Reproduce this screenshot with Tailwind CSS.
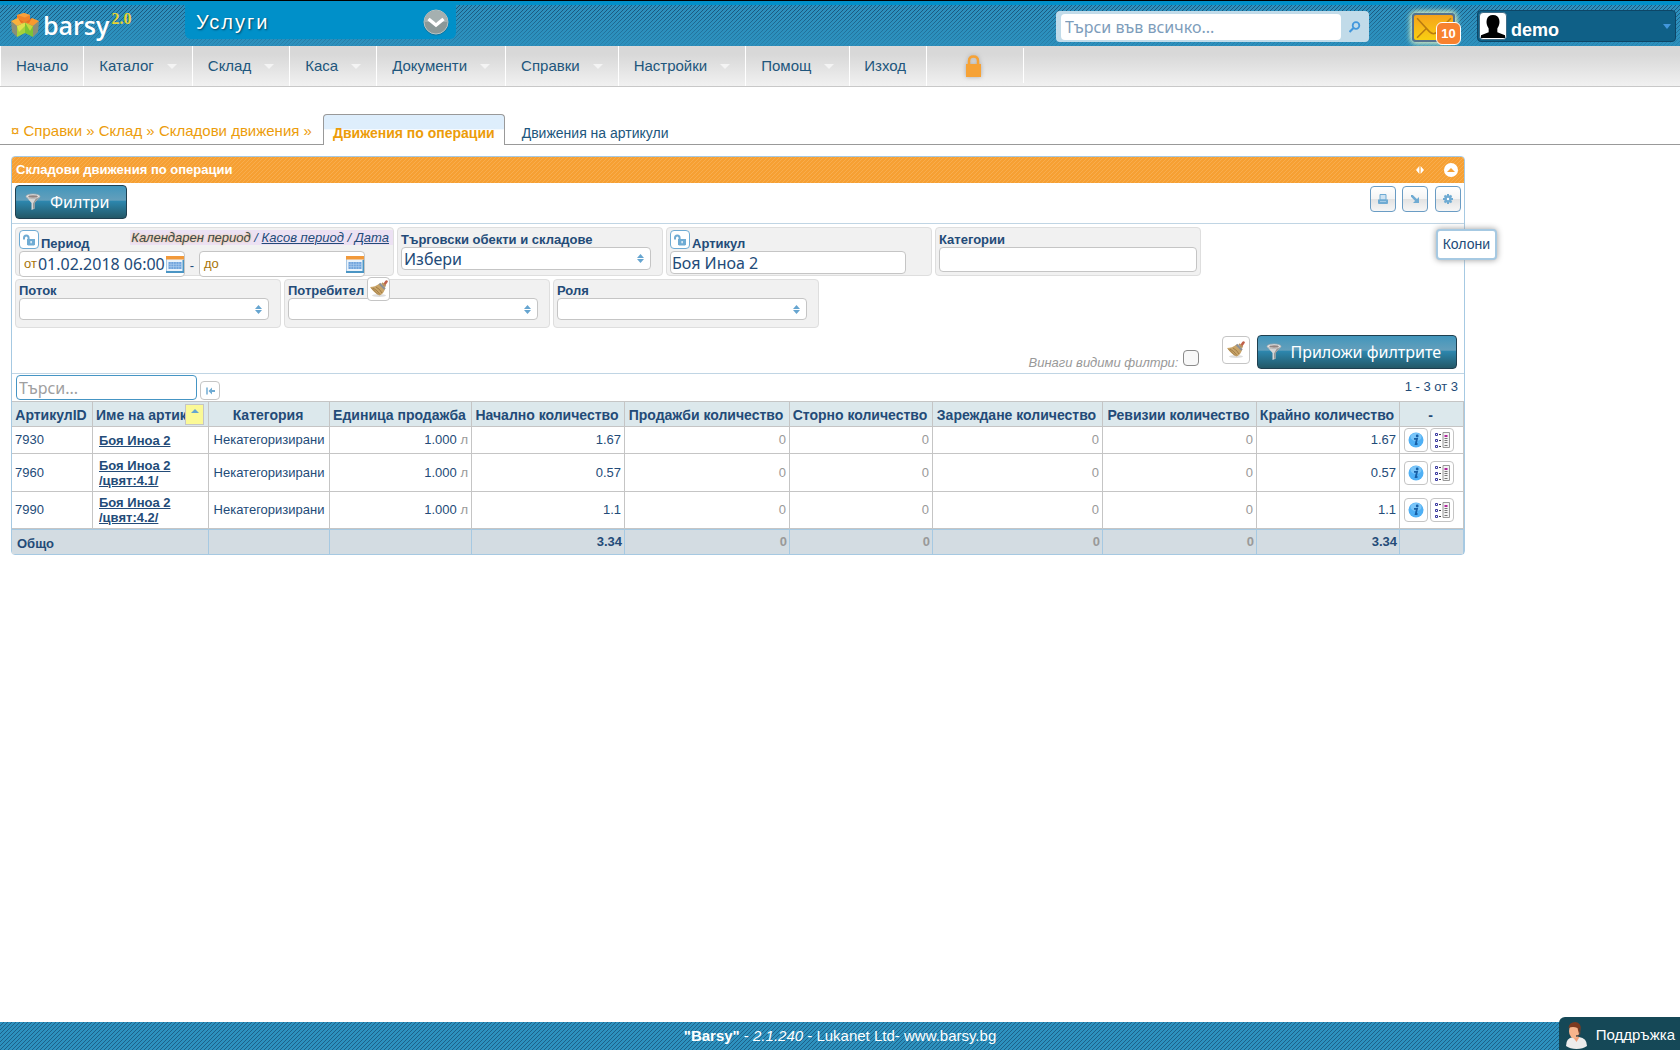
<!DOCTYPE html>
<html lang="bg">
<head>
    <meta charset="UTF-8">
    <meta name="viewport" content="width=device-width, initial-scale=1.0">
    <title>Barsy - Складови движения по операции</title>
    <script src="https://cdn.jsdelivr.net/npm/@tailwindcss/browser@4"></script>
    <style>
        .hatch, .hatch-fade, .hatch-orange {
            background-color: #2d91be;
            background-image: linear-gradient(135deg, transparent 42%, #1d6189 44% 56%, transparent 58%);
            background-size: 4px 4px;
        }
        .hatch-fade {
            background-image: linear-gradient(rgba(43, 143, 188, 0) 20%, rgba(43, 143, 188, .8)), linear-gradient(135deg, transparent 42%, #1b587e 44% 56%, transparent 58%);
            background-size: 100% 100%, 4px 4px;
        }
        .hatch-orange {
            background-color: #f6a033;
            background-image: linear-gradient(135deg, transparent 42%, #f8ad4e 44% 56%, transparent 58%);
        }
    </style>
</head>
<body class="flex min-h-screen flex-col bg-white font-['Liberation_Sans',Arial,sans-serif] text-[13px] text-[#234b78]">
    <!-- icons -->
    <svg class="hidden">
        <symbol id="unlock" viewBox="0 0 12 12">
            <path d="M1 5.500V4q0-2.500 2.300-2.500T5.600 4v2" fill="none" stroke="#6fabd3" stroke-width="2" />
            <path d="M4 5h8v5.500l-1 1H5l-1-1z" fill="#6fabd3" />
            <path d="M7.500 7h1.200v2.200H7.500z" fill="#fff" />
        </symbol>
        <symbol id="updown" viewBox="0 0 7 9">
            <path d="M3.500 0 7 4H0zM3.500 9 0 5h7z" fill="#66a5d0" />
        </symbol>
        <symbol id="broom" viewBox="0 0 18 18">
            <ellipse cx="9" cy="15.500" rx="7" ry="1.500" fill="#ddd" />
            <path d="m14 5 2.500-3.500" stroke="#c0604a" stroke-width="2.600" stroke-linecap="round" />
            <path d="M9.500 3.500 15 9q-1.500 5-5.500 6.500Q4.500 13.500 0 7q5 0 9.500-3.500z" fill="#c9a468" />
            <path d="M3 8q4 2 7 6.500M6 7q4 2 6 6M1.500 8 8 14.500" fill="none" stroke="#8f6c38" stroke-width=".7" />
            <path d="m9.500 3.500 5.500 5.500" stroke="#8b8f96" stroke-width="2.200" />
            <path d="m12 3 3.500 3.500" stroke="#b89560" stroke-width="2" />
        </symbol>
        <symbol id="funnel" viewBox="0 0 16 18">
            <path d="M1 3.500 6.500 10v7l3-1.200V10L15 3.500z" fill="#d6d6d6" />
            <path d="M8 10.500V16l1.500-.7V10L15 3.500h-3z" fill="#969696" />
            <ellipse cx="8" cy="3.300" rx="7" ry="2.300" fill="#e5e5e5" stroke="#aaa" stroke-width=".7" />
            <ellipse cx="8" cy="3.500" rx="4.800" ry="1.200" fill="#918481" />
        </symbol>
        <symbol id="calendar" viewBox="0 0 18 17">
            <path d="M.5.5h17v16H.5z" fill="#eaf3fb" stroke="#a9c8e4" />
            <path d="M0 0h18v3.500H0z" fill="#f1993a" />
            <path d="M2.500 6h13v7h-13z" fill="#6fa3dc" />
            <path d="M2.500 8.300h13M2.500 10.600h13M5 6v7M7.600 6v7M10.200 6v7M12.800 6v7" stroke="#b5d2f0" stroke-width=".6" />
            <path d="M0 15h16.500V4H18v13H0z" fill="#4a95c4" />
        </symbol>
        <symbol id="info" viewBox="0 0 16 16">
            <circle cx="8" cy="8" r="7.500" fill="#4fb0f5" />
            <ellipse cx="8" cy="5" rx="5.500" ry="4" fill="#8fd0fb" opacity=".7" />
            <circle cx="9.200" cy="4" r="1.400" fill="#175fa6" />
            <path d="M6 6.800h3L7.700 12H9.500" fill="none" stroke="#175fa6" stroke-width="1.800" />
        </symbol>
        <symbol id="details" viewBox="0 0 16 16">
            <path d="M1.500 1.500h2v2h-2zM1.500 7.500h2v2h-2zM1.500 13.500h2v2h-2z" fill="#fff" stroke="#3a3aa0" />
            <path d="M5 2.500h2M5 8.500h2M5 14.500h2" stroke="#444" />
            <path d="M9 .5h6.500v15H9z" fill="#f4f4f4" stroke="#999" />
            <path d="M10.500 4h3" stroke="#b0269c" stroke-width="2" />
            <path d="M10.500 6.500h3M10.500 8.500h3M10.500 10.500h3M10.500 13.500h3" stroke="#777" />
        </symbol>
    </svg>

    <header class="hatch-fade flex h-[46px] justify-between border-t border-black shadow-[inset_0_4px_0_#0090c9]">
        <div class="flex">
            <a href="#" class="flex w-[185px] items-start pt-3 pl-[11px]" aria-label="barsy 2.0">
                <svg class="h-[25px] w-7" viewBox="0 0 28 25">
                    <path d="M0 8l6 5v11l-5-5zM28 8l-6 5v11l5-5z" fill="#8a8f78" />
                    <path d="M6 13l8-3.500V20l-8 4z" fill="#a5d23c" />
                    <path d="M22 13l-8-3.500V20l8 4z" fill="#7cc435" />
                    <path d="M6 13l8-3.500V13l-6 6z" fill="#dfe04a" />
                    <path d="M14 9.500l8 3.500-3 5z" fill="#c4d83c" />
                    <path d="M6 2l7-2 6 2v4.500L14 9.500 6 6.500z" fill="#f08428" />
                    <path d="M6 2l7-2 6 2-5 2.500z" fill="#f9a03a" />
                    <path d="M0 8l7-3 7 4.500L6 13z" fill="#fbb13c" />
                    <path d="M28 8l-7-3-7 4.500 8 3.500z" fill="#f89a2e" />
                    <path d="M7 5l7 4.500L10 10zM21 5l-7 4.500 4 .5z" fill="#e96f20" />
                </svg>
                <span class="ml-1 font-['Open_Sans',sans-serif] text-[25px] leading-6 font-semibold text-white">barsy</span>
                <span class="ml-[2px] font-['Liberation_Serif',serif] text-base leading-3 font-bold text-[#e8d330]">2.0</span>
            </a>
            <button class="flex h-[38px] w-[271px] items-center justify-between rounded-b-md bg-[#0090c9] pt-[3px] pr-[6px] pl-[11px] text-xl tracking-widest text-white text-shadow-[1px_1px_2px_#00405a]">
                Услуги
                <svg class="h-7 w-7" viewBox="0 0 28 28">
                    <circle cx="14" cy="15" r="12.500" fill="#1b6a8c" opacity=".6" />
                    <circle cx="14" cy="14" r="12" fill="#8b9898" stroke="#b8c4c4" />
                    <path d="M2.500 14a11.500 11.500 0 0 1 23 0z" fill="#a5b0b0" />
                    <path d="m6.500 11 7.500 6 7.500-6" fill="none" stroke="#fff" stroke-width="3.500" />
                </svg>
            </button>
        </div>
        <div class="flex pr-1">
            <form class="mt-[10px] flex h-[31px] w-[313px] items-center rounded bg-[#c1dbe9] pl-[5px]">
                <input type="text" aria-label="Търси във всичко" placeholder="Търси във всичко..." class="h-[26px] w-[280px] rounded bg-white px-1 font-['Noto_Sans',sans-serif] text-base placeholder:text-[#7d9dbb]">
                <button type="button" aria-label="Търси" class="flex flex-1 justify-center">
                    <svg class="h-3 w-3" viewBox="0 0 12 12"><circle cx="7" cy="4.500" r="3.300" fill="none" stroke="#4297dc" stroke-width="1.800" /><path d="m4.500 7-4 4" stroke="#4297dc" stroke-width="2.200" /></svg>
                </button>
            </form>
            <button aria-label="Съобщения" class="relative mt-3 ml-[43px] h-[29px] w-[43px] rounded border-2 border-[#56728f] bg-gradient-to-b from-[#f5a21b] to-[#f8cf10] shadow-[0_0_5px_2px_#d8ecc0]">
                <svg class="h-full w-full" viewBox="0 0 38 24"><path d="M3 3l12 13q4 4 8 0L36 3M3 22 12 13M36 22 27 13" fill="none" stroke="#b97c10" stroke-width="1.500" /></svg>
                <span class="absolute top-[7px] left-[22px] flex h-[23px] w-[25px] items-center justify-center rounded-md border border-white bg-[#f8822f] text-[13px] font-bold text-white">10</span>
            </button>
            <button class="mt-[9px] ml-[22px] flex h-8 w-[199px] items-center rounded border border-[#0d4667] bg-[#0f6087] pr-1 pl-px text-lg font-bold text-white">
                <svg class="h-7 w-7 rounded-sm border border-[#3f6c87] bg-white" viewBox="0 0 27 27"><path d="M1 26v-3l8-3v-4Q6 12 7 7q1-5 6.500-5T20 7q1 5-2 9v4l8 3v3z" fill="#000" /></svg>
                <span class="mt-[8px] ml-1">demo</span>
                <svg class="ml-auto h-[5px] w-2" viewBox="0 0 8 5"><path d="M0 0h8L4 5z" fill="#4297dc" /></svg>
            </button>
        </div>
    </header>

    <nav id="mainMenu" class="flex h-[41px] border-b border-[#c8c8c8] bg-gradient-to-b from-[#d8d8d8] from-20% to-[#f1f1f1] text-[15px] text-[#21567c]">
        <div class="border-l border-white"></div>
    </nav>

    <div class="mt-[27px] flex h-[31px] border-b border-[#999]">
        <div class="mt-2 ml-[11px] w-[312px] text-[15px] leading-[18px] text-[#ec9c0a]">
            ¤ <a href="#">Справки</a> » <a href="#">Склад</a> » <a href="#">Складови движения</a> »
        </div>
        <a href="#" class="flex h-[31px] items-center rounded-t border border-b-0 border-[#999] bg-gradient-to-b from-[#deeefc] from-45% to-white to-50% px-[9px] pt-[6px] text-sm font-bold text-[#ec9c0a]">Движения по операции</a>
        <a href="#" class="ml-[17px] flex items-center pt-[7px] text-sm text-[#21567c]">Движения на артикули</a>
    </div>

    <main class="relative mt-[11px] mr-[215px] ml-[11px] rounded border border-[#a6c9e2]">
        <div class="hatch-orange flex h-[26px] items-center rounded-t-[3px] pr-[6px] pl-1 font-bold text-white">
            <h1>Складови движения по операции</h1>
            <svg class="ml-auto h-2 w-2" viewBox="0 0 8 8"><path d="M3.400 0v8L0 4zM4.600 0v8L8 4z" fill="#fff" /></svg>
            <button aria-label="Свий" class="ml-5 flex h-[14px] w-[14px] items-center justify-center rounded-full bg-white">
                <svg class="h-1 w-2" viewBox="0 0 8 4"><path d="M0 4h8L4 0z" fill="#f6a236" /></svg>
            </button>
        </div>

        <div class="flex h-[41px] items-start border-b border-[#c0d5e4] pt-[2px] pr-[3px] pl-[3px]">
            <button class="flex h-[34px] items-center rounded border border-[#1f3f4f] bg-[linear-gradient(#4296bc,#649fbb_45%,#2d88b0_46%,#235867)] pr-[16px] pl-[9px] font-['Noto_Sans',sans-serif] text-base text-white">
                <svg class="mr-[9px] h-[18px] w-4"><use href="#funnel" /></svg>Филтри
            </button>
            <div class="mt-px ml-auto flex gap-[6px]">
                <button aria-label="Печат" class="flex h-[26px] w-[26px] items-center justify-center rounded border border-[#6a9cc4] bg-[linear-gradient(#fff,#f4f4f4_49%,#e2e2e2_50%,#f6f6f6)]">
                    <svg class="h-[10px] w-[10px]" viewBox="0 0 10 10"><path d="M2 .5h6V6H2z" fill="#cfe3f2" stroke="#6fabd3" /><path d="M0 5.500h10V9q0 1-1 1H1Q0 10 0 9z" fill="#6fabd3" /><path d="M2 7.500h6" stroke="#a4cbe6" /></svg>
                </button>
                <button aria-label="Експорт" class="flex h-[26px] w-[26px] items-center justify-center rounded border border-[#6a9cc4] bg-[linear-gradient(#fff,#f4f4f4_49%,#e2e2e2_50%,#f6f6f6)]">
                    <svg class="h-2 w-2" viewBox="0 0 8 8"><path d="m0 0 6 6" stroke="#6fabd3" stroke-width="2.500" /><path d="M8 2v6H2z" fill="#6fabd3" /></svg>
                </button>
                <button aria-label="Колони" class="ml-px flex h-[26px] w-[26px] items-center justify-center rounded border border-[#6a9cc4] bg-[linear-gradient(#fff,#f4f4f4_49%,#e2e2e2_50%,#f6f6f6)]">
                    <svg class="h-[10px] w-[10px]" viewBox="0 0 10 10"><path d="M5 0v10M0 5h10M1.500 1.500l7 7M8.500 1.500l-7 7" stroke="#6fabd3" stroke-width="2" /><circle cx="5" cy="5" r="3.700" fill="#6fabd3" /><circle cx="5" cy="5" r="1.200" fill="#fff" /></svg>
                </button>
            </div>
        </div>

        <!-- filters -->
        <div class="flex flex-wrap gap-[3px] pt-[3px] pl-[3px]">
            <div class="h-[49px] w-[379px] rounded border border-[#dedede] bg-[#f1f1f1] pl-[3px]">
                <div class="flex h-[23px] items-start pt-[2px]">
                    <button aria-label="Отключи" class="flex h-[19px] w-5 items-center justify-center rounded-sm border border-[#6fabd3] bg-white"><svg class="h-3 w-3"><use href="#unlock" /></svg></button>
                    <label for="dateFrom" class="ml-[2px] pt-[5px] leading-[18px] font-bold">Период</label>
                    <div class="ml-auto bg-[#ece1f3] pr-1 pl-px leading-[15px] italic">
                        <span class="text-[#3c4a50] text-shadow-[0_0_2px_#f3b64c]">Календарен период</span> / <a href="#" class="underline">Касов период</a> / <a href="#" class="underline">Дата</a>
                    </div>
                </div>
                <div class="flex items-center">
                    <div class="flex h-[26px] w-[166px] items-center rounded border border-[#c5c5c5] bg-white pl-1">
                        <span class="text-[#a87408]">от</span>
                        <input id="dateFrom" type="text" value="01.02.2018 06:00" class="w-0 flex-1 pl-px font-['Noto_Sans',sans-serif] text-base">
                        <svg class="h-[17px] w-[18px]"><use href="#calendar" /></svg>
                    </div>
                    <span class="w-[14px] pt-1 text-center">-</span>
                    <div class="flex h-[26px] w-[166px] items-center rounded border border-[#c5c5c5] bg-white pl-1">
                        <label for="dateTo" class="text-[#a87408]">до</label>
                        <input id="dateTo" type="text" class="w-0 flex-1 pl-px font-['Noto_Sans',sans-serif] text-base">
                        <svg class="h-[17px] w-[18px]"><use href="#calendar" /></svg>
                    </div>
                </div>
            </div>
            <div class="h-[49px] w-[266px] rounded border border-[#dedede] bg-[#f1f1f1] pl-[3px]">
                <label for="objects" class="block h-[19px] pt-1 leading-4 font-bold">Търговски обекти и складове</label>
                <div class="relative w-[250px]">
                    <select id="objects" class="block h-[23px] w-full appearance-none rounded border border-[#c5c5c5] bg-white pl-[2px] font-['Noto_Sans',sans-serif] text-base leading-5"><option>Избери</option></select>
                    <svg class="pointer-events-none absolute top-[7px] right-[7px] h-[9px] w-[7px]"><use href="#updown" /></svg>
                </div>
            </div>
            <div class="h-[49px] w-[266px] rounded border border-[#dedede] bg-[#f1f1f1] pl-[3px]">
                <div class="flex h-[23px] items-start pt-[2px]">
                    <button aria-label="Отключи" class="flex h-[19px] w-5 items-center justify-center rounded-sm border border-[#6fabd3] bg-white"><svg class="h-3 w-3"><use href="#unlock" /></svg></button>
                    <label for="article" class="ml-[2px] pt-[5px] leading-[18px] font-bold">Артикул</label>
                </div>
                <input id="article" type="text" value="Боя Иноа 2" class="block h-[23px] w-[236px] rounded border border-[#c5c5c5] bg-white pl-px font-['Noto_Sans',sans-serif] text-base">
            </div>
            <div class="h-[49px] w-[266px] rounded border border-[#dedede] bg-[#f1f1f1] pl-[3px]">
                <label for="categories" class="block h-[19px] pt-1 leading-4 font-bold">Категории</label>
                <input id="categories" type="text" class="block h-[25px] w-[258px] rounded border border-[#c5c5c5] bg-white px-[2px]">
            </div>
        </div>
        <div class="flex gap-[3px] pt-[3px] pl-[3px]">
            <div class="h-[49px] w-[266px] rounded border border-[#dedede] bg-[#f1f1f1] pl-[3px]">
                <label for="flow" class="block h-[18px] pt-[3px] leading-4 font-bold">Поток</label>
                <div class="relative w-[250px]">
                    <select id="flow" class="block h-[22px] w-full appearance-none rounded border border-[#c5c5c5] bg-white"><option></option></select>
                    <svg class="pointer-events-none absolute top-[7px] right-[7px] h-[9px] w-[7px]"><use href="#updown" /></svg>
                </div>
            </div>
            <div class="relative h-[49px] w-[266px] rounded border border-[#dedede] bg-[#f1f1f1] pl-[3px]">
                <label for="user" class="block h-[18px] pt-[3px] leading-4 font-bold">Потребител</label>
                <div class="relative w-[250px]">
                    <select id="user" class="block h-[22px] w-full appearance-none rounded border border-[#c5c5c5] bg-white"><option></option></select>
                    <svg class="pointer-events-none absolute top-[7px] right-[7px] h-[9px] w-[7px]"><use href="#updown" /></svg>
                </div>
                <button aria-label="Изчисти" class="absolute -top-[3px] left-[82px] flex h-6 w-[23px] items-center justify-center rounded border border-[#c5c5c5] bg-white"><svg class="h-[18px] w-[18px]"><use href="#broom" /></svg></button>
            </div>
            <div class="h-[49px] w-[266px] rounded border border-[#dedede] bg-[#f1f1f1] pl-[3px]">
                <label for="role" class="block h-[18px] pt-[3px] leading-4 font-bold">Роля</label>
                <div class="relative w-[250px]">
                    <select id="role" class="block h-[22px] w-full appearance-none rounded border border-[#c5c5c5] bg-white"><option></option></select>
                    <svg class="pointer-events-none absolute top-[7px] right-[7px] h-[9px] w-[7px]"><use href="#updown" /></svg>
                </div>
            </div>
        </div>
        <div class="flex h-[46px] items-start justify-end border-b border-[#c0d5e4] pt-[7px] pr-[7px]">
            <label for="always" class="mt-5 text-[13px] leading-4 text-[#999] italic">Винаги видими филтри:</label>
            <input id="always" type="checkbox" class="mt-[15px] ml-[5px] h-4 w-4 appearance-none rounded border border-[#8a8a8a] bg-[#f8f8f8]">
            <button aria-label="Изчисти филтрите" class="mt-px ml-[23px] flex h-7 w-7 items-center justify-center rounded border border-[#c5c5c5] bg-white"><svg class="h-[18px] w-[18px]"><use href="#broom" /></svg></button>
            <button class="ml-[7px] flex h-[34px] items-center rounded border border-[#1f3f4f] bg-[linear-gradient(#4296bc,#649fbb_45%,#2d88b0_46%,#235867)] pr-[15px] pl-[8px] font-['Noto_Sans',sans-serif] text-base text-white">
                <svg class="mr-[8px] h-[18px] w-4"><use href="#funnel" /></svg>Приложи филтрите
            </button>
        </div>

        <div class="flex h-[27px] items-start pt-px pr-[6px] pl-1">
            <input type="text" aria-label="Търси в таблицата" placeholder="Търси..." class="h-[25px] w-[181px] rounded border border-[#4595c4] px-[2px] font-['Noto_Sans',sans-serif] text-base placeholder:text-[#a0a0a0]">
            <button aria-label="Първа страница" class="mt-[6px] ml-[3px] flex h-[19px] w-5 items-center justify-center rounded border border-[#c5c5c5]">
                <svg class="h-2 w-[9px]" viewBox="0 0 9 8"><path d="M1 .5v7" stroke="#6fabd3" stroke-width="1.500" /><path d="M6 .5v7L2.500 4zM5 3h4v2H5z" fill="#6fabd3" /></svg>
            </button>
            <span class="ml-auto pt-1 leading-4">1 - 3 от 3</span>
        </div>

        <table class="w-full table-fixed border-separate border-spacing-0 leading-4">
            <colgroup>
                <col class="w-[81px]"><col class="w-[116px]"><col class="w-[121px]"><col class="w-[142px]"><col class="w-[153px]"><col class="w-[165px]"><col class="w-[143px]"><col class="w-[170px]"><col class="w-[154px]"><col class="w-[143px]"><col>
            </colgroup>
            <thead><tr id="gridHead"></tr></thead>
            <tbody id="gridBody"></tbody>
            <tfoot><tr id="gridFoot"></tr></tfoot>
        </table>

        <div role="tooltip" class="absolute top-[72px] -right-[33px] flex h-[31px] items-center rounded-sm border-2 border-[#a6c9e2] bg-white px-[5px] pb-px text-sm shadow-[0_0_6px_#999]">Колони</div>
    </main>

    <footer class="hatch relative mt-auto flex h-7 items-center justify-center text-[15px] text-white">
        <p><b>"Barsy"</b> - <i>2.1.240</i> - Lukanet Ltd- www.barsy.bg</p>
        <button class="absolute right-0 bottom-0 flex h-[33px] items-center rounded-tl-md bg-[#154857] pt-1 pr-[5px] pl-[7px]">
            <svg class="mr-[9px] h-[27px] w-[21px]" viewBox="0 0 21 27">
                <path d="M0 24q0-8 7-9h6q8 1 8 9-4 3-10.500 3T0 24z" fill="#ececec" />
                <path d="m7 15 3.500 5 3-5z" fill="#f0a078" />
                <ellipse cx="8.500" cy="9" rx="5.500" ry="7.500" fill="#f7b48c" />
                <path d="M2.500 6Q3 0 9.500 0q5.500 1 5.500 7l-2 5-1.500-6Q7 4 2.500 6z" fill="#7c3a20" />
                <path d="M14 6v5q0 3-4 3" fill="none" stroke="#444" stroke-width="1.300" />
            </svg>Поддръжка
        </button>
    </footer>

    <script>
        const menu = [
            ['Начало', false], ['Каталог', true], ['Склад', true], ['Каса', true], ['Документи', true],
            ['Справки', true], ['Настройки', true], ['Помощ', true], ['Изход', false],
        ];
        const mainMenu = document.getElementById('mainMenu');
        menu.forEach(([title, sub], i) => {
            const arrow = sub ? '<svg class="ml-[13px] h-[5px] w-[10px]" viewBox="0 0 10 5"><path d="M0 0h10L5 5z" fill="#f4f4f4"/></svg>' : '';
            const padding = i === menu.length - 1 ? 'pl-[14px] pr-5' : 'px-[15px]';
            mainMenu.innerHTML += `<a href="#" class="flex items-center border-r border-white ${padding}">${title}${arrow}</a>`;
        });
        mainMenu.innerHTML += `
            <a href="#" aria-label="Заключи" class="mt-[2px] flex h-[35px] w-[97px] items-center justify-center border-r border-white pr-1">
                <svg class="h-[22px] w-[15px] drop-shadow-[0_0_2px_#aaa]" viewBox="0 0 15 22"><path d="M3 11V6q0-4.500 4.500-4.500T12 6v5" fill="none" stroke="#f6a236" stroke-width="2.500"/><path d="M0 9h15v13H0z" fill="#f6a236"/></svg>
            </a>`;

        const columns = ['АртикулID', 'Име на артикул', 'Категория', 'Единица продажба', 'Начално количество', 'Продажби количество', 'Сторно количество', 'Зареждане количество', 'Ревизии количество', 'Крайно количество', '-'];
        document.getElementById('gridHead').innerHTML = columns.map((title, i) => {
            const sort = i === 1 ? '<span class="absolute top-[2px] right-1 flex h-[21px] w-[19px] justify-center border border-[#c5c5c5] bg-[#fbf996] pt-1"><svg class="h-1 w-2" viewBox="0 0 8 4"><path d="M0 4h8L4 0z" fill="#66a5d0"/></svg></span>' : '';
            const align = i === 1 ? 'pl-[3px] text-left' : 'pr-[3px] pl-px text-center';
            return `<th class="relative h-[26px] overflow-hidden border-y border-r border-[#c5c5c5] bg-[#dce8ec] pt-[2px] text-sm leading-5 whitespace-nowrap ${align}">${title}${sort}</th>`;
        }).join('');

        const rows = [
            { id: 7930, name: 'Боя Иноа 2', start: '1.67', end: '1.67', height: 'h-[27px]' },
            { id: 7960, name: 'Боя Иноа 2<br>/цвят:4.1/', start: '0.57', end: '0.57', height: 'h-[38px]' },
            { id: 7990, name: 'Боя Иноа 2<br>/цвят:4.2/', start: '1.1', end: '1.1', height: 'h-[37px]' },
        ];
        const td = 'border-r border-b border-[#c5c5c5] px-[3px]';
        const zero = `<td class="${td} text-right text-[#999]">0</td>`;
        const iconButton = (icon, label) => `<button aria-label="${label}" class="flex h-6 w-6 items-center justify-center rounded border border-[#c5c5c5] bg-white"><svg class="h-4 w-4"><use href="#${icon}"/></svg></button>`;
        document.getElementById('gridBody').innerHTML = rows.map((r) => `
            <tr class="${r.height}">
                <td class="${td}">${r.id}</td>
                <td class="${td}"><a href="#" class="block pl-[3px] leading-[15px] font-bold underline">${r.name}</a></td>
                <td class="${td} text-center">Некатегоризирани</td>
                <td class="${td} text-right">1.000 <span class="text-[#999]">л</span></td>
                <td class="${td} text-right">${r.start}</td>
                ${zero}${zero}${zero}${zero}
                <td class="${td} text-right">${r.end}</td>
                <td class="border-r border-b border-[#c5c5c5] pl-1"><div class="flex gap-[2px]">${iconButton('info', 'Информация')}${iconButton('details', 'Детайли')}</div></td>
            </tr>`).join('');

        const totals = ['Общо', '', '', '3.34', '0', '0', '0', '0', '3.34', ''];
        document.getElementById('gridFoot').innerHTML = totals.map((value, i) => {
            const look = value === '0' ? 'text-right text-[#999]' : i > 0 ? 'text-right' : 'pl-[5px] pt-1 text-left';
            return `<td ${i === 0 ? 'colspan="2"' : ''} class="h-[25px] border-t border-r border-[#a6c9e2] bg-[#d3dce2] px-[2px] font-bold ${look}">${value}</td>`;
        }).join('');
    </script>
</body>
</html>
